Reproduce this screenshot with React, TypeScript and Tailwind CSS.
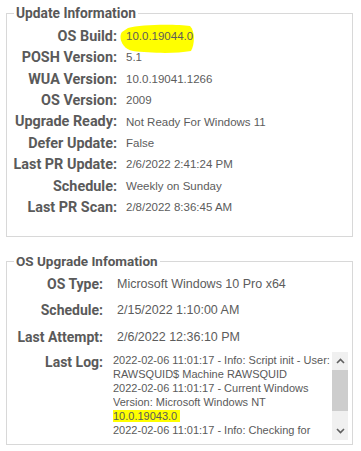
import React from 'react';

const labelFont = { fontFamily: 'Roboto, "Liberation Sans", Arial, sans-serif' };
const valueFont = { fontFamily: '"Liberation Sans", Arial, sans-serif' };

const updateRows: [string, string][] = [
  ['OS Build:', '10.0.19044.0'],
  ['POSH Version:', '5.1'],
  ['WUA Version:', '10.0.19041.1266'],
  ['OS Version:', '2009'],
  ['Upgrade Ready:', 'Not Ready For Windows 11'],
  ['Defer Update:', 'False'],
  ['Last PR Update:', '2/6/2022 2:41:24 PM'],
  ['Schedule:', 'Weekly on Sunday'],
  ['Last PR Scan:', '2/8/2022 8:36:45 AM'],
];

const upgradeRows: [string, string][] = [
  ['OS Type:', 'Microsoft Windows 10 Pro x64'],
  ['Schedule:', '2/15/2022 1:10:00 AM'],
  ['Last Attempt:', '2/6/2022 12:36:10 PM'],
];

// freehand marker blob behind the OS build number
const Highlight = () => (
  <svg
    className="absolute left-[-7px] top-[-4px] w-[76px] h-[30px] pointer-events-none"
    viewBox="0 0 76 30"
  >
    <path
      d="M9 4 C22 0, 58 0, 71 2 C76 7, 76 20, 72 27 C56 30, 30 29, 14 27 C3 25, -1 13, 3 8 Z"
      fill="#ffff00"
    />
  </svg>
);

const ScrollBar = () => (
  <div className="w-[16px] h-full bg-[#f0f0f0] flex flex-col shrink-0">
    <div className="h-[18px] flex items-center justify-center">
      <svg width="9" height="6" viewBox="0 0 9 6">
        <path d="M1 5 L4.5 1.5 L8 5" fill="none" stroke="#606060" strokeWidth="1.6" />
      </svg>
    </div>
    <div className="h-[41px] bg-[#cdcdcd]" />
    <div className="flex-1" />
    <div className="h-[18px] flex items-center justify-center">
      <svg width="9" height="6" viewBox="0 0 9 6">
        <path d="M1 1 L4.5 4.5 L8 1" fill="none" stroke="#606060" strokeWidth="1.6" />
      </svg>
    </div>
  </div>
);

export default function App() {
  return (
    <div className="w-[361px] h-[451px] bg-white pt-[4px] px-[6px] text-[#555]">
      <fieldset className="border border-[#d8d8d8] w-[347px] h-[233px]">
        <legend
          className="ml-[7px] px-[2px] text-[13.75px] leading-[18px] font-bold text-[#585858]"
          style={labelFont}
        >
          Update Information
        </legend>
        <div className="grid grid-cols-[110px_1fr] gap-x-[9px] auto-rows-[21.4px] mt-[4px]">
          {updateRows.map(([label, value], i) => (
            <React.Fragment key={label}>
              <div
                className="text-[14.4px] font-bold text-[#5a5a5a] flex items-center justify-end whitespace-nowrap"
                style={labelFont}
              >
                {label}
              </div>
              <div
                className="flex items-center text-[11.5px] text-[#5c5c5c] whitespace-nowrap"
                style={valueFont}
              >
                <span className="relative">
                  {i === 0 && <Highlight />}
                  <span className="relative">{value}</span>
                </span>
              </div>
            </React.Fragment>
          ))}
        </div>
      </fieldset>

      <fieldset className="border border-[#d8d8d8] w-[347px] h-[193px] mt-[15px]">
        <legend
          className="ml-[7px] px-[2px] text-[13.5px] leading-[18px] font-bold text-[#585858]"
          style={labelFont}
        >
          OS Upgrade Infomation
        </legend>
        <div className="grid grid-cols-[96px_1fr] gap-x-[14px] mt-[1px]">
          {upgradeRows.map(([label, value]) => (
            <React.Fragment key={label}>
              <div
                className="h-[26.5px] text-[14px] font-bold text-[#5a5a5a] flex items-center justify-end whitespace-nowrap"
                style={labelFont}
              >
                {label}
              </div>
              <div
                className="h-[26.5px] flex items-center text-[12.5px] text-[#5c5c5c] whitespace-nowrap"
                style={valueFont}
              >
                {value}
              </div>
            </React.Fragment>
          ))}
          <div
            className="text-[14px] font-bold text-[#5a5a5a] text-right pt-[1px] leading-[18px] mt-[1px] whitespace-nowrap"
            style={labelFont}
          >
            Last Log:
          </div>
          <div className="flex h-[88px] mt-[1px] ml-[-4px] mr-[4px]">
            <div
              className="flex-1 h-[86px] overflow-hidden text-[11px] leading-[14px] text-[#5a5a5a] pt-[1px] pr-[2px]"
              style={valueFont}
            >
              2022-02-06 11:01:17 - Info: Script init - User: RAWSQUID$ Machine RAWSQUID
              <br />
              2022-02-06 11:01:17 - Current Windows Version: Microsoft Windows NT{' '}
              <span className="bg-[#ffff00] pr-[3px]">10.0.19043.0</span>
              <br />
              2022-02-06 11:01:17 - Info: Checking for
            </div>
            <ScrollBar />
          </div>
        </div>
      </fieldset>
    </div>
  );
}
